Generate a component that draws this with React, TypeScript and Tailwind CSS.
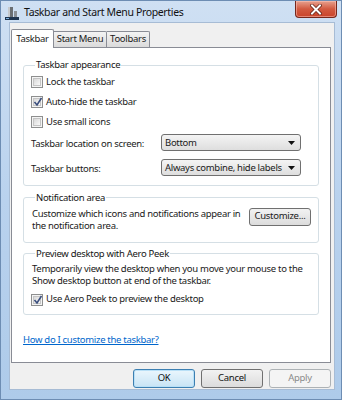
import React from 'react'

const font = "font-['Noto_Sans',sans-serif]"

const Checkbox = ({ checked }: { checked?: boolean }) => (
  <span className="flex w-[12px] h-[12px] shrink-0 border border-[#8e8f8f] bg-[#f4f4f4] p-[1px]">
    <span className="relative flex-1 border border-[#c5c5c5] bg-gradient-to-br from-[#d8d8d8] to-[#f9f9f9]">
      {checked && (
        <svg className="absolute left-[-1px] top-[-2px] overflow-visible" width="10" height="10" viewBox="0 0 10 10">
          <path d="M1.5 5 L4 8 L8.5 1" fill="none" stroke="#3b4f7e" strokeWidth="1.6" />
        </svg>
      )}
    </span>
  </span>
)

const Dropdown = ({ value }: { value: string }) => (
  <div className="flex items-center h-[17px] rounded-[3px] border border-[#707070] bg-gradient-to-b from-[#f4f4f4] to-[#dedede] pl-[3px] pr-[5px]">
    <span className="flex-1 whitespace-nowrap text-[#1a1a1a]">{value}</span>
    <svg width="7" height="4" viewBox="0 0 7 4">
      <path d="M0 0 H7 L3.5 4 Z" fill="#111" />
    </svg>
  </div>
)

const Button = ({ label, variant }: { label: string; variant?: 'default' | 'disabled' }) => {
  const styles =
    variant === 'default'
      ? 'border-[#3c7fb1] bg-gradient-to-b from-[#eaf6fd] to-[#c8e4f5] text-[#111] shadow-[inset_0_0_0_1px_#b9e0f7]'
      : variant === 'disabled'
        ? 'border-[#adb2b5] bg-[#f4f4f4] text-[#8a8a8a]'
        : 'border-[#707070] bg-gradient-to-b from-[#f2f2f2] to-[#dcdcdc] text-[#111]'
  return (
    <div className={`flex items-center justify-center w-[62px] h-[19px] rounded-[3px] border ${styles}`}>
      {label}
    </div>
  )
}

const Group = ({ title, children, className }: { title: string; children: React.ReactNode; className?: string }) => (
  <fieldset className={`rounded-[3px] border border-[#d5dfe5] px-[7px] ${className ?? ''}`}>
    <legend className="ml-[4px] px-[1px] leading-[12px] text-[#151515]">{title}</legend>
    {children}
  </fieldset>
)

const CheckRow = ({ label, checked, className }: { label: string; checked?: boolean; className?: string }) => (
  <div className={`flex items-center gap-[3px] h-[20px] ${className ?? ''}`}>
    <Checkbox checked={checked} />
    <span>{label}</span>
  </div>
)

export default function App() {
  return (
    <div className={`${font} w-[342px] h-[400px] flex flex-col bg-gradient-to-b from-[#cfe0f3] via-[#b9d2ee] to-[#aecbea] border border-[#6d8db3] overflow-hidden text-[9.5px] tracking-[-0.3px] text-[#1a1a1a]`}>
      {/* Title bar */}
      <div className="flex h-[21px] shrink-0">
        <div className="flex items-center gap-[5px] pl-[4px] pt-[2px]">
          <svg width="14" height="14" viewBox="0 0 14 14">
            <rect x="3" y="1" width="5" height="10" fill="#6b6f73" />
            <rect x="3" y="1" width="2" height="10" fill="#c6c9cc" />
            <rect x="9" y="5" width="3" height="6" fill="#8b9096" />
            <rect x="0" y="11" width="14" height="3" fill="#1f3550" />
            <rect x="1" y="12" width="3" height="1" fill="#7fb3e0" />
          </svg>
          <span className="text-[10.5px] tracking-[-0.35px] text-[#111]">Taskbar and Start Menu Properties</span>
        </div>
        <div className="ml-auto mr-[4px] flex items-center justify-center w-[42px] h-[17px] rounded-b-[4px] border border-t-0 border-[#76271b] bg-gradient-to-b from-[#e6a08e] via-[#d2593f] to-[#c9442a] shadow-[inset_0_0_0_1px_rgba(255,200,190,0.5)]">
          <svg width="12" height="11" viewBox="0 0 12 11">
            <path d="M2 1.5 L10 9.5 M10 1.5 L2 9.5" stroke="#5a1a0e" strokeWidth="3.4" strokeLinecap="square" />
            <path d="M2 1.5 L10 9.5 M10 1.5 L2 9.5" stroke="#ffffff" strokeWidth="2" strokeLinecap="square" />
          </svg>
        </div>
      </div>

      {/* Client area */}
      <div className="flex flex-col flex-1 ml-[8px] mr-[6px] mb-[9px] bg-[#f0f0f0] border border-[#a7bcd5]">
        {/* Tabs */}
        <div className="flex items-end h-[24px] pl-[1px]">
          <div className="relative z-10 flex items-center justify-center w-[43px] h-[19px] -mb-[1px] border border-b-0 border-[#898c95] bg-white rounded-t-[2px]">
            Taskbar
          </div>
          <div className="flex items-center justify-center w-[53px] h-[16px] border border-l-0 border-b-0 border-[#898c95] bg-gradient-to-b from-[#f3f3f3] to-[#dbdbdb] rounded-tr-[2px]">
            Start Menu
          </div>
          <div className="flex items-center justify-center w-[43px] h-[16px] border border-l-0 border-b-0 border-[#898c95] bg-gradient-to-b from-[#f3f3f3] to-[#dbdbdb] rounded-tr-[2px]">
            Toolbars
          </div>
        </div>

        {/* Tab panel */}
        <div className="flex flex-col w-[320px] h-[316px] ml-[1px] border border-[#898c95] bg-white px-[11px] pt-[11px]">
          <Group title="Taskbar appearance" className="pb-[8px]">
            <CheckRow label="Lock the taskbar" className="mt-[1px]" />
            <CheckRow label="Auto-hide the taskbar" checked />
            <CheckRow label="Use small icons" />
            <div className="grid grid-cols-[130px_140px] items-center mt-[2px]">
              <span className="pt-[3px]">Taskbar location on screen:</span>
              <Dropdown value="Bottom" />
            </div>
            <div className="grid grid-cols-[130px_140px] items-center mt-[8px]">
              <span className="pt-[3px]">Taskbar buttons:</span>
              <Dropdown value="Always combine, hide labels" />
            </div>
          </Group>

          <Group title="Notification area" className="mt-[6px] pb-[10px]">
            <div className="flex items-start justify-between pt-[4px] pl-[1px]">
              <p className="w-[212px] leading-[12px]">
                Customize which icons and notifications appear in the notification area.
              </p>
              <div className="flex items-center justify-center w-[62px] h-[18px] rounded-[3px] border border-[#707070] bg-gradient-to-b from-[#f2f2f2] to-[#dcdcdc]">
                Customize...
              </div>
            </div>
          </Group>

          <Group title="Preview desktop with Aero Peek" className="mt-[5px] pb-[4px]">
            <p className="pt-[3px] pl-[1px] leading-[12px]">
              Temporarily view the desktop when you move your mouse to the Show desktop button at end of the taskbar.
            </p>
            <CheckRow label="Use Aero Peek to preview the desktop" checked className="mt-[3px]" />
          </Group>

          <a className="mt-[18px] text-[#0066cc] underline">How do I customize the taskbar?</a>
        </div>

        {/* Buttons */}
        <div className="flex justify-end gap-[6px] mt-[6px] pr-[3px]">
          <Button label="OK" variant="default" />
          <Button label="Cancel" />
          <Button label="Apply" variant="disabled" />
        </div>
      </div>
    </div>
  )
}
